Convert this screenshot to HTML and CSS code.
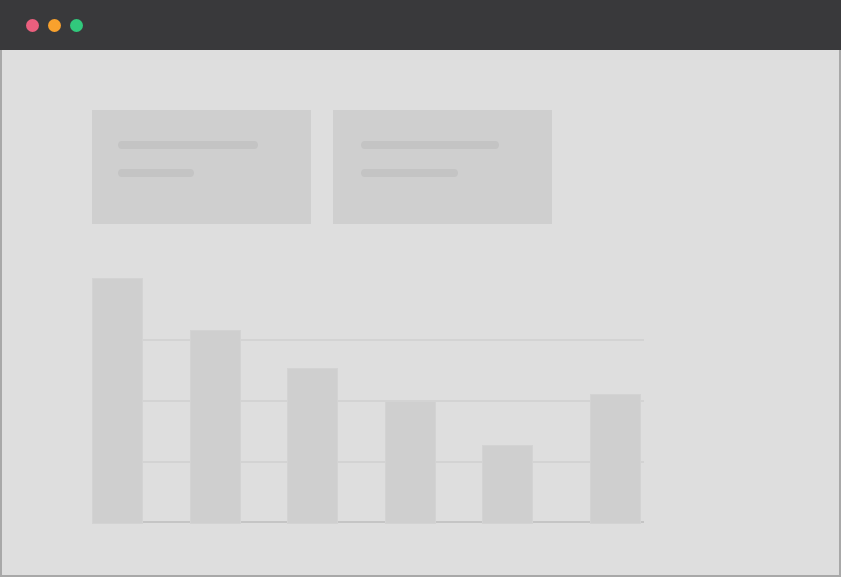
FILE: index.html
```html
<!DOCTYPE html>
<html>
<head>
<meta charset="utf-8">
<link rel="stylesheet" href="styles.css">
</head>
<body>
<div class="window">
  <div class="titlebar">
    <span class="dot red"></span>
    <span class="dot orange"></span>
    <span class="dot green"></span>
  </div>
  <div class="content">
    <div class="cards">
      <div class="card">
        <div class="line" style="width:140px"></div>
        <div class="line" style="width:76px"></div>
      </div>
      <div class="card card-b">
        <div class="line" style="width:138px"></div>
        <div class="line" style="width:97px"></div>
      </div>
    </div>
    <div class="chart">
      <div class="bar" style="height:246px"></div>
      <div class="bar" style="height:194px"></div>
      <div class="bar" style="height:156px"></div>
      <div class="bar" style="height:123px"></div>
      <div class="bar" style="height:79px"></div>
      <div class="bar bar-last" style="height:130px"></div>
    </div>
  </div>
</div>
</body>
</html>
```
FILE: styles.css
```css
html, body {
  margin: 0;
  padding: 0;
  background: #dedede;
  font-family: "Liberation Sans", Arial, sans-serif;
}
.window {
  width: 841px;
  height: 577px;
  display: flex;
  flex-direction: column;
  overflow: hidden;
}
.titlebar {
  height: 50px;
  flex: none;
  background: #39393b;
  display: flex;
  align-items: center;
  gap: 9px;
  padding: 1px 0 0 26px;
  box-sizing: border-box;
}
.dot {
  width: 13px;
  height: 13px;
  border-radius: 50%;
  display: block;
}
.red { background: #eb5f7e; }
.orange { background: #f9a12d; }
.green { background: #31c97c; }
.content {
  flex: 1;
  background: #dedede;
  border: 2px solid #a8a8a8;
  border-top: none;
  padding: 60px 0 0 90px;
  box-sizing: border-box;
}
.cards {
  display: flex;
  gap: 22px;
}
.card {
  width: 219px;
  height: 114px;
  background: #cfcfcf;
  box-sizing: border-box;
  padding: 31px 0 0 26px;
  display: flex;
  flex-direction: column;
  gap: 20px;
}
.card-b {
  padding-left: 28px;
}
.line {
  height: 8px;
  border-radius: 4px;
  background: #c4c4c4;
}
.chart {
  margin-top: 54px;
  width: 552px;
  height: 246px;
  display: flex;
  align-items: flex-end;
  gap: 46.5px;
  background:
    linear-gradient(#d3d3d3, #d3d3d3) 0 61px / 100% 2px no-repeat,
    linear-gradient(#d3d3d3, #d3d3d3) 0 122px / 100% 2px no-repeat,
    linear-gradient(#d3d3d3, #d3d3d3) 0 183px / 100% 2px no-repeat,
    linear-gradient(#c5c5c5, #c5c5c5) 0 243px / 100% 2px no-repeat;
}
.bar {
  width: 51px;
  flex: none;
  background: #cfcfcf;
  box-sizing: border-box;
  border: 1px solid #d3d3d3;
}
.bar-last {
  margin-left: 10px;
}
```
